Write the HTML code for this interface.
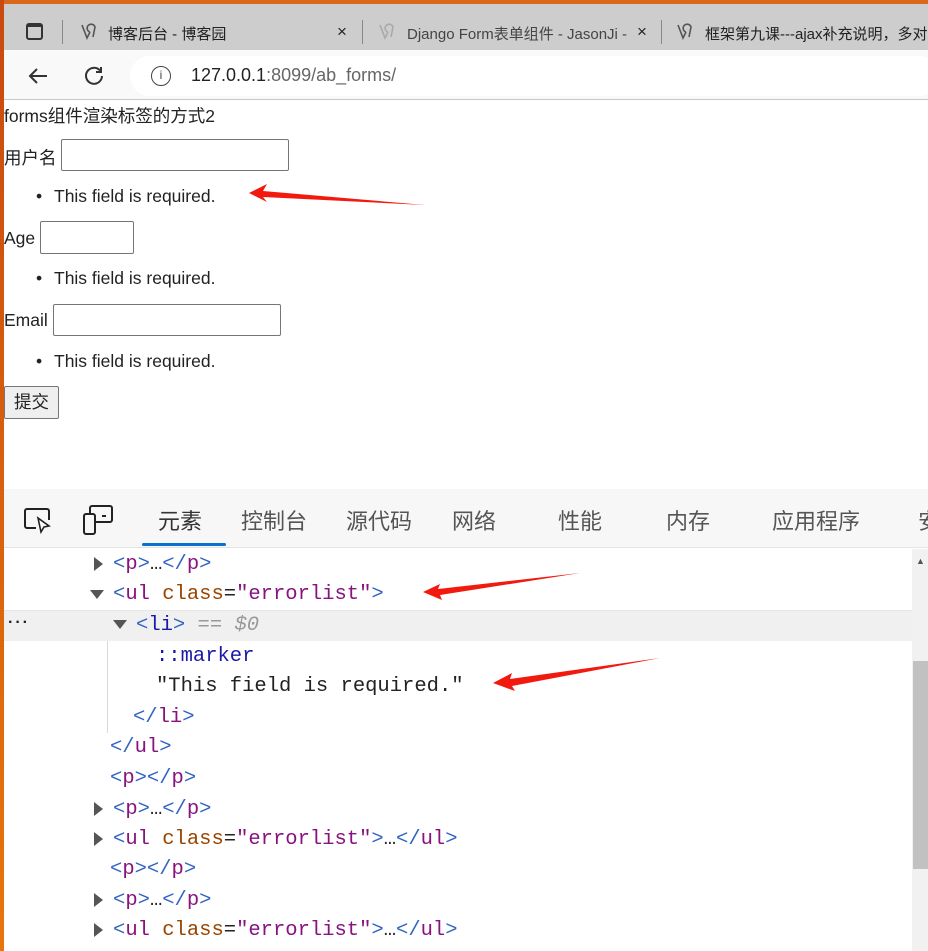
<!DOCTYPE html>
<html><head><meta charset="utf-8"><style>
*{margin:0;padding:0;box-sizing:border-box}
body{width:928px;height:951px;position:relative;overflow:hidden;background:#fff;font-family:"Liberation Sans","Noto Sans CJK SC",sans-serif;color:#222}
.a{position:absolute;white-space:nowrap}
.pg{font-size:17.5px;color:#222;margin-top:2px}
.inp{position:absolute;border:1px solid #767676;border-radius:2px;background:#fff}
.m{font-family:"Liberation Mono",monospace;font-size:20.5px;position:absolute;white-space:nowrap;margin-top:3px}
.tg{color:#881280}.br{color:#3164c4}.at{color:#994500}.av{color:#1a1aa6}
.tri{position:absolute;width:0;height:0}
.r{border-top:7px solid transparent;border-bottom:7px solid transparent;border-left:9px solid #555}
.d{border-left:7px solid transparent;border-right:7px solid transparent;border-top:9px solid #555}
.tab{font-size:15px;color:#222}
.dt{font-size:22px;color:#555;font-family:"Liberation Sans","Noto Sans CJK SC",sans-serif}
</style></head><body>
<div class="a" style="left:0;top:0;width:928px;height:4px;background:#d9681c"></div>
<div class="a" style="left:0;top:4px;width:928px;height:46px;background:#cdcdcd"></div>
<div class="a" style="left:0;top:50px;width:928px;height:50px;background:#f9f9f9"></div>
<div class="a" style="left:0;top:99px;width:928px;height:1px;background:#c8c8c8"></div>
<div class="a" style="left:130px;top:56px;width:810px;height:40px;background:#fff;border-radius:20px"></div>
<div class="a" style="left:26px;top:23px;width:17px;height:17px;border:2px solid #333;border-radius:3px;border-top-width:4px"></div>
<div class="a" style="left:62px;top:20px;width:1px;height:24px;background:#888"></div>
<svg class="a" style="left:78px;top:21px" width="20" height="20"><path d="M4 4l5 13 3-6M12 11a4 4 0 1 1 5-5l-2 10" stroke="#555" stroke-width="1.6" fill="none"/></svg>
<div class="a tab" style="left:108px;top:23px">博客后台 - 博客园</div>
<div class="a tab" style="left:337px;top:22px;font-size:17px">×</div>
<div class="a" style="left:362px;top:20px;width:1px;height:24px;background:#888"></div>
<svg class="a" style="left:376px;top:21px" width="20" height="20"><path d="M4 4l5 13 3-6M12 11a4 4 0 1 1 5-5l-2 10" stroke="#aaa" stroke-width="1.6" fill="none"/></svg>
<div class="a tab" style="left:407px;top:23px;color:#444">Django Form表单组件 - JasonJi -</div>
<div class="a tab" style="left:637px;top:22px;font-size:17px">×</div>
<div class="a" style="left:661px;top:20px;width:1px;height:24px;background:#888"></div>
<svg class="a" style="left:674px;top:21px" width="20" height="20"><path d="M4 4l5 13 3-6M12 11a4 4 0 1 1 5-5l-2 10" stroke="#555" stroke-width="1.6" fill="none"/></svg>
<div class="a tab" style="left:705px;top:23px">框架第九课---ajax补充说明，多对</div>
<svg class="a" style="left:26px;top:64px" width="24" height="24"><path d="M21 12H4M11 5L4 12l7 7" stroke="#333" stroke-width="2" fill="none"/></svg>
<svg class="a" style="left:82px;top:64px" width="24" height="24"><path d="M18 6.5A8 8 0 1 0 20 12" stroke="#333" stroke-width="2" fill="none"/><path d="M19 3v5h-5" stroke="#333" stroke-width="2" fill="none"/></svg>
<div class="a" style="left:151px;top:66px;width:20px;height:20px;border:1.5px solid #444;border-radius:50%;font-size:12px;text-align:center;line-height:17px;color:#444">i</div>
<div class="a" style="left:191px;top:65px;font-size:18px;color:#222">127.0.0.1<span style="color:#666">:8099/ab_forms/</span></div>
<div class="a" style="left:0;top:0;width:4px;height:951px;background:linear-gradient(#c84a10,#e8750c)"></div>
<div class="a pg" style="left:4px;top:101px">forms组件渲染标签的方式2</div>
<div class="a pg" style="left:4px;top:143px">用户名</div>
<div class="inp" style="left:61px;top:139px;width:228px;height:32px"></div>
<div class="a pg" style="left:36px;top:184px">•</div>
<div class="a pg" style="left:54px;top:184px">This field is required.</div>
<div class="a pg" style="left:4px;top:226px">Age</div>
<div class="inp" style="left:40px;top:221px;width:94px;height:33px"></div>
<div class="a pg" style="left:36px;top:266px">•</div>
<div class="a pg" style="left:54px;top:266px">This field is required.</div>
<div class="a pg" style="left:4px;top:308px">Email</div>
<div class="inp" style="left:53px;top:304px;width:228px;height:32px"></div>
<div class="a pg" style="left:36px;top:349px">•</div>
<div class="a pg" style="left:54px;top:349px">This field is required.</div>
<div class="a" style="left:4px;top:386px;width:55px;height:33px;border:1px solid #767676;border-radius:2px;background:#efefef;text-align:center;line-height:30px;font-size:17.5px">提交</div>
<svg class="a" style="left:245px;top:180px" width="185" height="30"><polygon points="4,13 22,4 18,11 180,25 18,17 22,22" fill="#f21a0e"/></svg>
<div class="a" style="left:4px;top:489px;width:924px;height:59px;background:#f7f7f7;border-bottom:1px solid #e3e3e3"></div>
<svg class="a" style="left:22px;top:506px" width="34" height="30"><path d="M14 22H5a2 2 0 0 1-2-2V5a2 2 0 0 1 2-2h20a2 2 0 0 1 2 2v9" stroke="#222" stroke-width="2" fill="none"/><path d="M16 12l3 14 3-5 5-1z" stroke="#222" stroke-width="1.6" fill="#fff"/></svg>
<svg class="a" style="left:82px;top:504px" width="34" height="34"><rect x="2" y="10" width="11" height="20" rx="2" stroke="#222" stroke-width="2" fill="none"/><path d="M8 10V4a2 2 0 0 1 2-2h18a2 2 0 0 1 2 2v12a2 2 0 0 1-2 2H13" stroke="#222" stroke-width="2" fill="none"/><path d="M20 12h4" stroke="#222" stroke-width="2"/></svg>
<div class="a dt" style="left:158px;top:504px;color:#333">元素</div>
<div class="a" style="left:142px;top:543px;width:84px;height:3px;background:#0b6fcd;border-radius:2px"></div>
<div class="a dt" style="left:241px;top:504px">控制台</div>
<div class="a dt" style="left:346px;top:504px">源代码</div>
<div class="a dt" style="left:452px;top:504px">网络</div>
<div class="a dt" style="left:558px;top:504px">性能</div>
<div class="a dt" style="left:666px;top:504px">内存</div>
<div class="a dt" style="left:772px;top:504px">应用程序</div>
<div class="a dt" style="left:918px;top:504px">安</div>
<div class="a" style="left:912px;top:549px;width:16px;height:402px;background:#f1f1f1"></div>
<div class="a" style="left:913px;top:661px;width:15px;height:208px;background:#c1c1c1"></div>
<div class="a" style="left:916px;top:556px;font-size:9px;color:#555">▲</div>
<div class="a" style="left:4px;top:610px;width:908px;height:31px;background:#f0f0f0;border-top:1px solid #e6e6e6"></div>
<div class="a" style="left:107px;top:641px;width:1px;height:92px;background:#d8d8d8"></div>
<div class="tri r" style="left:94px;top:557px"></div>
<div class="m" style="left:113px;top:550px"><span class="br">&lt;</span><span class="tg">p</span><span class="br">&gt;</span>…<span class="br">&lt;/</span><span class="tg">p</span><span class="br">&gt;</span></div>
<div class="tri d" style="left:90px;top:590px"></div>
<div class="m" style="left:113px;top:580px"><span class="br">&lt;</span><span class="tg">ul</span> <span class="at">class</span>=<span class="tg">"errorlist"</span><span class="br">&gt;</span></div>
<svg class="a" style="left:420px;top:570px" width="165" height="30"><polygon points="3,22 20,14 18,19 160,3 20,25 22,30" fill="#f21a0e"/></svg>
<div class="a" style="left:8px;top:614px;font-size:16px;font-weight:bold;color:#222;letter-spacing:2px">···</div>
<div class="tri d" style="left:113px;top:620px"></div>
<div class="m" style="left:136px;top:611px"><span class="br">&lt;</span><span class="av">li</span><span class="br">&gt;</span> <span style="color:#999;font-style:italic">== $0</span></div>
<div class="m" style="left:156px;top:642px;color:#1a1aa6">::marker</div>
<div class="m" style="left:156px;top:672px;color:#222">"This field is required."</div>
<svg class="a" style="left:490px;top:655px" width="175" height="38"><polygon points="3,28 22,18 20,24 170,3 22,31 25,36" fill="#f21a0e"/></svg>
<div class="m" style="left:133px;top:703px"><span class="br">&lt;/</span><span class="tg">li</span><span class="br">&gt;</span></div>
<div class="m" style="left:110px;top:733px"><span class="br">&lt;/</span><span class="tg">ul</span><span class="br">&gt;</span></div>
<div class="m" style="left:110px;top:764px"><span class="br">&lt;</span><span class="tg">p</span><span class="br">&gt;&lt;/</span><span class="tg">p</span><span class="br">&gt;</span></div>
<div class="tri r" style="left:94px;top:802px"></div>
<div class="m" style="left:113px;top:795px"><span class="br">&lt;</span><span class="tg">p</span><span class="br">&gt;</span>…<span class="br">&lt;/</span><span class="tg">p</span><span class="br">&gt;</span></div>
<div class="tri r" style="left:94px;top:832px"></div>
<div class="m" style="left:113px;top:825px"><span class="br">&lt;</span><span class="tg">ul</span> <span class="at">class</span>=<span class="tg">"errorlist"</span><span class="br">&gt;</span>…<span class="br">&lt;/</span><span class="tg">ul</span><span class="br">&gt;</span></div>
<div class="m" style="left:110px;top:855px"><span class="br">&lt;</span><span class="tg">p</span><span class="br">&gt;&lt;/</span><span class="tg">p</span><span class="br">&gt;</span></div>
<div class="tri r" style="left:94px;top:893px"></div>
<div class="m" style="left:113px;top:886px"><span class="br">&lt;</span><span class="tg">p</span><span class="br">&gt;</span>…<span class="br">&lt;/</span><span class="tg">p</span><span class="br">&gt;</span></div>
<div class="tri r" style="left:94px;top:923px"></div>
<div class="m" style="left:113px;top:916px"><span class="br">&lt;</span><span class="tg">ul</span> <span class="at">class</span>=<span class="tg">"errorlist"</span><span class="br">&gt;</span>…<span class="br">&lt;/</span><span class="tg">ul</span><span class="br">&gt;</span></div>
</body></html>
